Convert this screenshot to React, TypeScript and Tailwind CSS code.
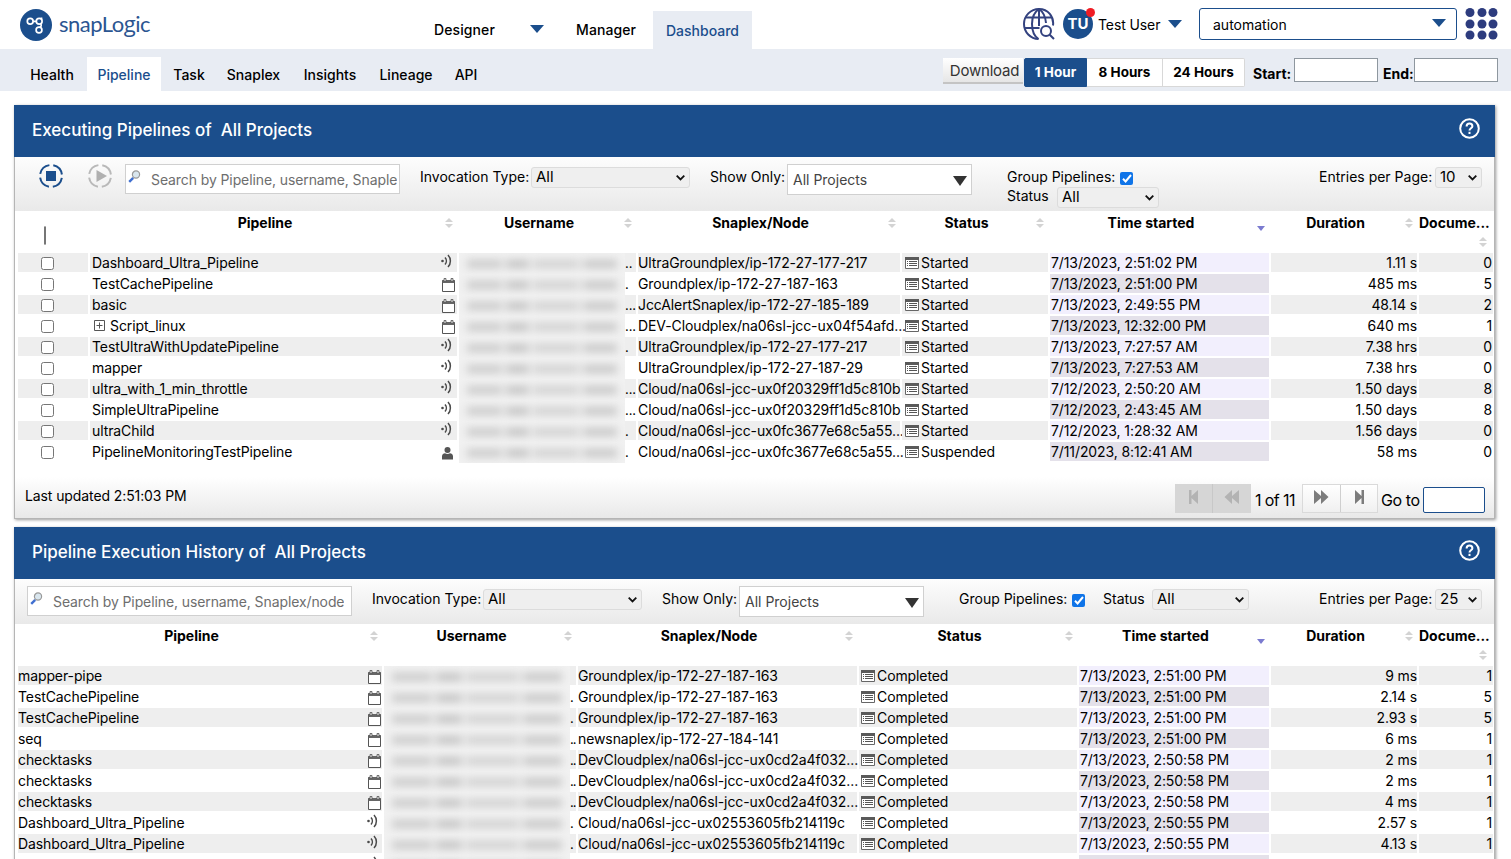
import { ReactNode } from "react";
import clsx from "clsx";

const BARS_A = [
  [4, 44, 50],
  [50, 46, 60],
  [100, 56, 50],
];

type Row = {
  name: string;
  icon: string;
  dots: string;
  node: string;
  status: string;
  time: string;
  duration: string;
  docs: string;
  child?: boolean;
};

const executing: Row[] = [
  { name: "Dashboard_Ultra_Pipeline", icon: "ultra", dots: "..", node: "UltraGroundplex/ip-172-27-177-217", status: "Started", time: "7/13/2023, 2:51:02 PM", duration: "1.11 s", docs: "0" },
  { name: "TestCachePipeline", icon: "cal", dots: ".", node: "Groundplex/ip-172-27-187-163", status: "Started", time: "7/13/2023, 2:51:00 PM", duration: "485 ms", docs: "5" },
  { name: "basic", icon: "cal", dots: "...", node: "JccAlertSnaplex/ip-172-27-185-189", status: "Started", time: "7/13/2023, 2:49:55 PM", duration: "48.14 s", docs: "2" },
  { name: "Script_linux", icon: "cal", dots: "...", node: "DEV-Cloudplex/na06sl-jcc-ux04f54afd...", status: "Started", time: "7/13/2023, 12:32:00 PM", duration: "640 ms", docs: "1", child: true },
  { name: "TestUltraWithUpdatePipeline", icon: "ultra", dots: ".", node: "UltraGroundplex/ip-172-27-177-217", status: "Started", time: "7/13/2023, 7:27:57 AM", duration: "7.38 hrs", docs: "0" },
  { name: "mapper", icon: "ultra", dots: "", node: "UltraGroundplex/ip-172-27-187-29", status: "Started", time: "7/13/2023, 7:27:53 AM", duration: "7.38 hrs", docs: "0" },
  { name: "ultra_with_1_min_throttle", icon: "ultra", dots: "...", node: "Cloud/na06sl-jcc-ux0f20329ff1d5c810b", status: "Started", time: "7/12/2023, 2:50:20 AM", duration: "1.50 days", docs: "8" },
  { name: "SimpleUltraPipeline", icon: "ultra", dots: "...", node: "Cloud/na06sl-jcc-ux0f20329ff1d5c810b", status: "Started", time: "7/12/2023, 2:43:45 AM", duration: "1.50 days", docs: "8" },
  { name: "ultraChild", icon: "ultra", dots: ".", node: "Cloud/na06sl-jcc-ux0fc3677e68c5a55...", status: "Started", time: "7/12/2023, 1:28:32 AM", duration: "1.56 days", docs: "0" },
  { name: "PipelineMonitoringTestPipeline", icon: "user", dots: ".", node: "Cloud/na06sl-jcc-ux0fc3677e68c5a55...", status: "Suspended", time: "7/11/2023, 8:12:41 AM", duration: "58 ms", docs: "0" },
];

const history: Row[] = [
  { name: "mapper-pipe", icon: "cal", dots: "", node: "Groundplex/ip-172-27-187-163", status: "Completed", time: "7/13/2023, 2:51:00 PM", duration: "9 ms", docs: "1" },
  { name: "TestCachePipeline", icon: "cal", dots: ".", node: "Groundplex/ip-172-27-187-163", status: "Completed", time: "7/13/2023, 2:51:00 PM", duration: "2.14 s", docs: "5" },
  { name: "TestCachePipeline", icon: "cal", dots: ".", node: "Groundplex/ip-172-27-187-163", status: "Completed", time: "7/13/2023, 2:51:00 PM", duration: "2.93 s", docs: "5" },
  { name: "seq", icon: "cal", dots: "..", node: "newsnaplex/ip-172-27-184-141", status: "Completed", time: "7/13/2023, 2:51:00 PM", duration: "6 ms", docs: "1" },
  { name: "checktasks", icon: "cal", dots: "..", node: "DevCloudplex/na06sl-jcc-ux0cd2a4f032...", status: "Completed", time: "7/13/2023, 2:50:58 PM", duration: "2 ms", docs: "1" },
  { name: "checktasks", icon: "cal", dots: "..", node: "DevCloudplex/na06sl-jcc-ux0cd2a4f032...", status: "Completed", time: "7/13/2023, 2:50:58 PM", duration: "2 ms", docs: "1" },
  { name: "checktasks", icon: "cal", dots: "..", node: "DevCloudplex/na06sl-jcc-ux0cd2a4f032...", status: "Completed", time: "7/13/2023, 2:50:58 PM", duration: "4 ms", docs: "1" },
  { name: "Dashboard_Ultra_Pipeline", icon: "ultra", dots: ".", node: "Cloud/na06sl-jcc-ux02553605fb214119c", status: "Completed", time: "7/13/2023, 2:50:55 PM", duration: "2.57 s", docs: "1" },
  { name: "Dashboard_Ultra_Pipeline", icon: "ultra", dots: ".", node: "Cloud/na06sl-jcc-ux02553605fb214119c", status: "Completed", time: "7/13/2023, 2:50:55 PM", duration: "4.13 s", docs: "1" },
  { name: "", icon: "ultra", dots: "", node: "", status: "", time: "", duration: "", docs: "" },
];

function Triangle({ className }: { className?: string }) {
  return (
    <svg width="14" height="8" viewBox="0 0 14 8" className={clsx("shrink-0", className)}>
      <path d="M0 0h14L7 8z" fill="currentColor" />
    </svg>
  );
}

function Logo() {
  return (
    <div className="flex w-[140px] shrink-0">
      <svg width="32" height="32" viewBox="0 0 32 32" className="mt-[9px] shrink-0">
        <circle cx="16" cy="16" r="16" fill="#1b4e8c" />
        <g fill="none" stroke="#fff" strokeWidth="1.7">
          <circle cx="10.2" cy="12.3" r="2.9" />
          <circle cx="19.2" cy="12.3" r="2.9" />
          <circle cx="19" cy="21" r="2.9" />
          <path d="M13.1 12.3h3.2M20.6 14.9c1.4 1.6.4 2.6-.8 3.3M21.5 10.5v-2" />
        </g>
      </svg>
      <span className="ml-[7px] mt-[9px] whitespace-nowrap font-['Lato'] text-[22px] leading-[28px] tracking-[-0.5px] text-[#2b5591]">
        snapLo<span className="font-['Open_Sans'] text-[22px]">g</span>ic
      </span>
    </div>
  );
}

function GlobeSearch() {
  return (
    <svg width="32" height="32" viewBox="0 0 32 32" fill="none" stroke="#33427f" strokeWidth="2" className="shrink-0">
      <path d="M30 17.5C31.2 8.500 25 1 16 1 7.700 1 1 7.700 1 16c0 8 6.500 15 14.500 15" />
      <path d="M16 1v17M15.500 31C11 28 9 22 9 16S11.500 4 16 1c4.500 3 6.500 8.500 7 14M3 9.500h26M1 20h15.500" />
      <circle cx="23" cy="23" r="5" />
      <path d="M26.700 26.700L31 31" />
    </svg>
  );
}

function AppsGrid() {
  return (
    <svg width="34" height="32" viewBox="0 0 34 32" fill="#2d3c7e" className="shrink-0">
      {[5, 17, 28].map((x) =>
        [4.5, 16, 27].map((y) => <circle key={x + "-" + y} cx={x} cy={y} r="4.500" />)
      )}
    </svg>
  );
}

function TypeIcon({ icon, dense }: { icon: string; dense?: boolean }) {
  if (icon === "ultra") {
    return (
      <svg width="11" height="14" viewBox="0 0 11 14" fill="none" stroke="#4a4a4a" strokeWidth="1.500" className={clsx("mb-[3px] shrink-0", dense ? "mr-[4px]" : "mr-[5px]")}>
        <circle cx="1.500" cy="7" r="1.300" fill="#4a4a4a" stroke="none" />
        <path d="M4 3.500c1.800 2 1.800 5 0 7M7 1c3.200 3.400 3.200 8.600 0 12" />
      </svg>
    );
  }
  if (icon === "user") {
    return (
      <svg width="11" height="13" viewBox="0 0 11 13" fill="#555" className="mr-[4px] mt-[3px] shrink-0">
        <circle cx="5.500" cy="3" r="3" />
        <path d="M0 12.500V9.200C0 7.200 1.600 6.200 3 6.200c1.500 1 3.500 1 5 0 1.400 0 3 1 3 3v3.300z" />
      </svg>
    );
  }
  return (
    <svg width="13" height="14" viewBox="0 0 13 14" className={clsx("mt-[3px] shrink-0", dense ? "mr-px" : "mr-[2px]")}>
      <path d="M.5 2.500h12v11H.5z" fill="#fff" stroke="#555" />
      <path d="M.5 2h12v3H.5z" fill="#666" />
      <path d="M2 .5h2v3H2zM9 .5h2v3H9z" fill="#ddd" stroke="#555" strokeWidth=".8" />
    </svg>
  );
}

function StatusIcon() {
  return (
    <svg width="14" height="12" viewBox="0 0 14 12" className="mr-[2px] shrink-0">
      <path d="M.5.5h13v11H.5z" fill="#fff" stroke="#666" />
      <path d="M0 0h14v3H0z" fill="#5a5a5a" />
      <path d="M2 4.500h1M4 4.500h8M2 6.500h1M4 6.500h8M2 8.500h1M4 8.500h8" stroke="#555" />
    </svg>
  );
}

function SortIcon() {
  return (
    <svg width="8" height="10" viewBox="0 0 8 10" fill="#d3d3d3" className="shrink-0">
      <path d="M4 0l4 4H0zM4 10l4-4H0z" />
    </svg>
  );
}

function CheckBox({ checked }: { checked?: boolean }) {
  if (checked) {
    return (
      <span className="flex h-[13px] w-[13px] shrink-0 items-center justify-center rounded-[2px] bg-[#0f74e8]">
        <svg width="10" height="9" viewBox="0 0 10 9" fill="none" stroke="#fff" strokeWidth="2">
          <path d="M1 4.800l2.600 2.600L9 1" />
        </svg>
      </span>
    );
  }
  return <span className="h-[13px] w-[13px] shrink-0 rounded-[2.5px] border border-[#767676] bg-white" />;
}

function Select({ value, className }: { value: string; className: string }) {
  return (
    <span className={clsx("flex h-[21px] shrink-0 items-center justify-between rounded-[3px] border border-[#dcdcdc] bg-[#efefef] pl-1 pr-1 text-[15px] text-black", className)}>
      {value}
      <svg width="9" height="6" viewBox="0 0 9 6" fill="none" stroke="#111" strokeWidth="1.800">
        <path d="M.7.7l3.800 3.800L8.300.7" />
      </svg>
    </span>
  );
}

function ProjectBox({ className }: { className: string }) {
  return (
    <span className={clsx("flex h-[31px] shrink-0 items-center justify-between border border-[#d0d0d0] bg-white pl-[5px] pr-[4px] text-[14px] text-[#444]", className)}>
      All Projects
      <svg width="14" height="10" viewBox="0 0 14 10" className="mt-[2px]">
        <path d="M0 0h14L7 10z" fill="#333" />
      </svg>
    </span>
  );
}

function SearchBox({ text, className }: { text: string; className: string }) {
  return (
    <span className={clsx("flex h-[30px] shrink-0 overflow-hidden border border-[#d0d0d0] bg-white pl-[2px] pr-[2px]", className)}>
      <svg width="13" height="13" viewBox="0 0 13 13" className="mt-[5px] shrink-0">
        <path d="M1.200 11.800l4-4" stroke="#3f6fd0" strokeWidth="2.400" />
        <circle cx="8" cy="4.500" r="3.600" fill="#d9e6ee" stroke="#999" strokeWidth="1.200" />
      </svg>
      <span className="ml-[10px] overflow-hidden whitespace-nowrap text-[14px] leading-[30px] tracking-[-0.1px] text-[#6e6e6e]">{text}</span>
    </span>
  );
}

function Label({ children, className }: { children: ReactNode; className: string }) {
  return <span className={clsx("shrink-0 whitespace-nowrap text-[14px] leading-[20px]", className)}>{children}</span>;
}

function PanelTitle({ children }: { children: ReactNode }) {
  return (
    <div className="flex h-[52px] shrink-0 items-center justify-between bg-[#1b4e8c] pl-[18px] pr-[15px]">
      <h2 className="whitespace-nowrap text-[17px] font-medium text-white">{children}</h2>
      <svg width="21" height="21" viewBox="0 0 21 21" fill="none" stroke="#fff" strokeWidth="2" className="mb-[5px]">
        <circle cx="10.500" cy="10.500" r="9.300" />
        <path d="M7.600 8.400c0-1.700 1.300-2.800 2.900-2.800s2.900 1 2.900 2.600c0 2-2.900 2.200-2.900 4.300" />
        <path d="M10.500 13.800v2.200" />
      </svg>
    </div>
  );
}

function HeadCell({ title, active }: { title: string; active?: boolean }) {
  return (
    <div className="flex pt-[2px]">
      <span className="flex-1 text-center leading-[20px]">{title}</span>
      <span className="w-[17px] pl-[5px] pt-[5px]">
        {active ? (
          <svg width="8" height="5" viewBox="0 0 8 5" className="mt-[8px]">
            <path d="M0 0h8L4 5z" fill="#7b7bd0" />
          </svg>
        ) : (
          <SortIcon />
        )}
      </span>
    </div>
  );
}

function Blurred() {
  return (
    <div className="flex h-[21px] flex-1 items-center overflow-hidden bg-[#f1f1f1]">
      <div className="flex h-[8px] w-full gap-1 px-2 blur-[4px]">
        <span className="flex-[3] bg-[#c9c9c9]" />
        <span className="flex-[2] bg-[#c2c2c2]" />
        <span className="flex-[4] bg-[#d0d0d0]" />
        <span className="flex-[3] bg-[#c6c6c6]" />
      </div>
    </div>
  );
}

function Table({ rows, selectable }: { rows: Row[]; selectable?: boolean }) {
  const cols = selectable
    ? "grid-cols-[70px_367px_177px_262px_146px_219px_146px_74px]"
    : "grid-cols-[364px_192px_279px_218px_190px_146px_74px]";
  return (
    <div className="pl-[3px] text-[14px] tracking-[-0.1px] text-black">
      <div className={clsx("grid h-[42px] gap-x-[2px] font-bold tracking-normal", cols)}>
        {selectable && (
          <div className="pl-[26px] pt-[14px]">
            <CheckBox />
          </div>
        )}
        <HeadCell title="Pipeline" />
        <HeadCell title="Username" />
        <HeadCell title="Snaplex/Node" />
        <HeadCell title="Status" />
        <HeadCell title="Time started" active />
        <HeadCell title="Duration" />
        <div className="flex flex-col pt-[2px]">
          <span className="leading-[20px]">Docume...</span>
          <span className="ml-[60px] mt-[4px]">
            <SortIcon />
          </span>
        </div>
      </div>
      {rows.map((r, i) => {
        const cell = clsx("flex h-[19px] items-center whitespace-nowrap", i % 2 === 0 && "bg-[#eeeeee]");
        return (
          <div key={i} className={clsx("grid h-[21px] gap-x-[2px]", cols)}>
            {selectable && (
              <div className={clsx(cell, "pl-[23px] pt-[2px]")}>
                <CheckBox />
              </div>
            )}
            <div className={clsx(cell, "justify-between", selectable && "pl-[2px]")}>
              <span className="flex items-center">
                {r.child && (
                  <svg width="11" height="11" viewBox="0 0 11 11" fill="none" stroke="#555" className="ml-[2px] mr-[5px]">
                    <path d="M.5.5h10v10H.5zM2.500 5.500h6M5.500 2.500v6" />
                  </svg>
                )}
                {r.name}
              </span>
              <TypeIcon icon={r.icon} dense={!selectable} />
            </div>
            <div className={clsx("flex h-[19px]", i % 2 === 0 && "bg-[#eeeeee]")}>
              <Blurred />
              <span className={clsx("text-[13px] leading-[20px]", selectable ? "w-[11px]" : "w-[6px] tracking-[-1px]")}>{r.dots}</span>
            </div>
            <div className={cell}>{r.node}</div>
            <div className={clsx(cell, selectable ? "pl-[3px]" : "pl-[2px]")}>
              {r.status && <StatusIcon />}
              {r.status}
            </div>
            <div className={clsx("flex h-[19px] items-center whitespace-nowrap pl-px", i % 2 === 0 ? "bg-[#f2effd]" : "bg-[#e4e1ea]")}>{r.time}</div>
            <div className={clsx(cell, "justify-end")}>{r.duration}</div>
            <div className={clsx(cell, "justify-end pr-px")}>{r.docs}</div>
          </div>
        );
      })}
    </div>
  );
}

function PagerIcon({ kind }: { kind: string }) {
  return (
    <svg width="18" height="14" viewBox="0 0 18 14" fill="currentColor">
      {kind === "first" && <path d="M4 0h2.500v6L13 0v14L6.500 8v6H4z" />}
      {kind === "prev" && <path d="M9 0v6l7-6v14L9 8v6L1.500 7z" />}
      {kind === "next" && <path d="M9 0v6L2 0v14l7-6v6l7.500-7z" />}
      {kind === "last" && <path d="M14 0h-2.500v6L5 0v14l6.500-6v6H14z" />}
    </svg>
  );
}

const tabs = [
  { title: "Health", width: "w-[64px]" },
  { title: "Pipeline", width: "w-[74px]" },
  { title: "Task", width: "w-[50px]" },
  { title: "Snaplex", width: "w-[73px]" },
  { title: "Insights", width: "w-[74px]" },
  { title: "Lineage", width: "w-[72px]" },
  { title: "API", width: "w-[42px]" },
];

export default function App() {
  return (
    <div className="h-[859px] w-[1511px] overflow-hidden bg-white font-['Inter',sans-serif] text-black">
      <header className="flex h-[49px] pl-[20px]">
        <Logo />
        <div className="ml-[274px] flex w-[219px] items-center pt-[9px] text-[14px] font-medium tracking-[0.1px]">
          <span className="w-[96px]">Designer</span>
          <Triangle className="text-[#1b4e8c]" />
          <span className="ml-[32px]">Manager</span>
        </div>
        <div className="mt-[11px] flex h-[38px] w-[99px] items-center justify-center bg-[#e8ecf3] text-[14px] font-medium text-[#1b4e8c]">Dashboard</div>
        <div className="ml-[271px] flex h-[49px] items-center pb-px">
          <GlobeSearch />
          <div className="relative ml-[8px] flex h-[30px] w-[30px] items-center justify-center rounded-full bg-[#1b4e8c] text-[15px] font-bold text-white">
            TU
            <span className="absolute -top-[1px] right-[-2px] h-[9px] w-[9px] rounded-full bg-[#f01c24]" />
          </div>
          <span className="ml-[5px] w-[70px] whitespace-nowrap text-[14px] tracking-[-0.1px]">Test User</span>
          <Triangle className="text-[#1b4e8c]" />
          <div className="ml-[17px] flex h-[32px] w-[258px] items-center justify-between rounded-[3px] border border-[#1b4e8c] pl-[13px] pr-[10px] text-[14px]">
            automation
            <Triangle className="mb-[3px] text-[#1b4e8c]" />
          </div>
          <div className="ml-[8px]">
            <AppsGrid />
          </div>
        </div>
      </header>

      <nav className="flex h-[42px] bg-[#e8ecf3] pl-[20px]">
        <div className="flex w-[923px] gap-[3px] pt-[8px]">
          {tabs.map((t) => (
            <a
              key={t.title}
              className={clsx(
                "flex h-[34px] items-center justify-center text-[14px] font-medium",
                t.width,
                t.title === "Pipeline" && "bg-white text-[#1b4e8c]"
              )}
            >
              {t.title}
            </a>
          ))}
        </div>
        <button className="mt-[9px] h-[26px] w-[80px] border-b-2 border-[#c4c4c4] bg-linear-to-b from-white to-[#e6e6e6] pl-[3px] text-[15px] leading-[23px] tracking-[-0.2px] text-[#333]">
          Download
        </button>
        <div className="ml-px mt-[9px] flex h-[29px] text-[13.5px] font-bold">
          <button className="w-[63px] rounded-l-[2px] border border-[#1b4e8c] bg-[#1b4e8c] text-white">1 Hour</button>
          <button className="w-[76px] border border-l-0 border-[#d8d8d8] bg-white">8 Hours</button>
          <button className="w-[82px] rounded-r-[2px] border border-l-0 border-[#d8d8d8] bg-white">24 Hours</button>
        </div>
        <span className="ml-[8px] w-[41px] pt-[14px] text-[14px] font-bold">Start:</span>
        <span className="mt-[9px] h-[24px] w-[84px] border border-[#8e979f] bg-white" />
        <span className="ml-[5px] w-[31px] pt-[14px] text-[14px] font-bold">End:</span>
        <span className="mt-[9px] h-[24px] w-[84px] border border-[#8e979f] bg-white" />
      </nav>

      <section className="ml-[14px] mt-[14px] h-[414px] w-[1481px] shadow-[1px_1px_3px_rgba(0,0,0,0.4)]">
        <PanelTitle>Executing Pipelines of&nbsp; All Projects</PanelTitle>
        <div className="border-x border-[#b5b5b5]">
          <div className="flex h-[54px] bg-linear-to-b from-[#fdfdfd] to-[#e9e9e9] pl-[23px]">
            <svg width="26" height="26" viewBox="0 0 26 26" fill="none" stroke="#1b4e8c" strokeWidth="2" className="mt-[6px] shrink-0">
              <circle cx="13" cy="13" r="11" strokeDasharray="13.280 4" strokeDashoffset="-2" />
              <path d="M8 8h10v10H8z" fill="#1b4e8c" stroke="none" />
            </svg>
            <svg width="26" height="26" viewBox="0 0 26 26" fill="none" stroke="#b9b9b9" strokeWidth="2" className="ml-[23px] mt-[6px] shrink-0">
              <circle cx="13" cy="13" r="11" strokeDasharray="13.280 4" strokeDashoffset="-2" />
              <path d="M9.500 7L20 13 9.500 19z" fill="#b0b0b0" stroke="none" />
            </svg>
            <SearchBox text="Search by Pipeline, username, Snaplex/node" className="ml-[12px] mt-[7px] w-[275px]" />
            <Label className="ml-[20px] mt-[10px] w-[111px]">Invocation Type:</Label>
            <Select value="All" className="mt-[10px] w-[159px]" />
            <Label className="ml-[20px] mt-[10px] w-[77px]">Show Only:</Label>
            <ProjectBox className="mt-[7px] w-[185px]" />
            <div className="ml-[35px] mt-[10px] w-[312px]">
              <div className="flex h-[20px]">
                <Label className="w-[113px]">Group Pipelines:</Label>
                <span className="pt-[5px]">
                  <CheckBox checked />
                </span>
              </div>
              <div className="flex">
                <Label className="-mt-px w-[50px]">Status</Label>
                <Select value="All" className="w-[102px]" />
              </div>
            </div>
            <Label className="mt-[10px] w-[116px]">Entries per Page:</Label>
            <Select value="10" className="mt-[10px] w-[47px]" />
          </div>
          <Table rows={executing} selectable />
          <div className="flex h-[56px] border-b border-[#b5b5b5] bg-linear-to-b from-white from-25% to-[#e9e9e9] pl-[10px]">
            <span className="w-[1150px] pt-[23px] text-[14px] leading-[20px] tracking-[-0.1px]">Last updated 2:51:03 PM</span>
            <div className="mt-[21px] flex h-[29px] w-[76px] bg-[#d6d6d6] text-[#b3b3b3]">
              <span className="flex w-[38px] items-center justify-center border-r border-[#c8c8c8] pb-[3px]">
                <PagerIcon kind="first" />
              </span>
              <span className="flex w-[38px] items-center justify-center pb-[3px]">
                <PagerIcon kind="prev" />
              </span>
            </div>
            <span className="ml-[4px] w-[47px] whitespace-nowrap pt-[27px] text-[16px] leading-[20px] tracking-[-0.6px]">1 of 11</span>
            <div className="mt-[21px] flex h-[29px] w-[76px] border border-[#dadada] bg-linear-to-b from-white to-[#f0f0f0] text-[#7c7c7c]">
              <span className="flex w-[38px] items-center justify-center border-r border-[#cfcfcf] pb-[3px]">
                <PagerIcon kind="next" />
              </span>
              <span className="flex w-[37px] items-center justify-center pb-[3px]">
                <PagerIcon kind="last" />
              </span>
            </div>
            <span className="ml-[3px] w-[42px] whitespace-nowrap pt-[27px] text-[16px] leading-[20px] tracking-[-0.4px]">Go to</span>
            <span className="mt-[24px] h-[26px] w-[62px] rounded-[2px] border border-[#1b4e8c] bg-white" />
          </div>
        </div>
      </section>

      <section className="ml-[14px] mt-[8px] h-[414px] w-[1481px] shadow-[1px_1px_3px_rgba(0,0,0,0.4)]">
        <PanelTitle>Pipeline Execution History of&nbsp; All Projects</PanelTitle>
        <div className="border-x border-[#b5b5b5]">
          <div className="flex h-[45px] bg-linear-to-b from-[#fdfdfd] to-[#e9e9e9] pl-[12px]">
            <SearchBox text="Search by Pipeline, username, Snaplex/node" className="mt-[7px] w-[325px]" />
            <Label className="ml-[20px] mt-[10px] w-[111px]">Invocation Type:</Label>
            <Select value="All" className="mt-[10px] w-[159px]" />
            <Label className="ml-[20px] mt-[10px] w-[77px]">Show Only:</Label>
            <ProjectBox className="mt-[7px] w-[185px]" />
            <Label className="ml-[35px] mt-[10px] w-[113px]">Group Pipelines:</Label>
            <span className="mt-[15px]">
              <CheckBox checked />
            </span>
            <Label className="ml-[18px] mt-[10px] w-[49px]">Status</Label>
            <Select value="All" className="mt-[10px] w-[97px]" />
            <Label className="ml-[70px] mt-[10px] w-[116px]">Entries per Page:</Label>
            <Select value="25" className="mt-[10px] w-[47px]" />
          </div>
          <Table rows={history} />
        </div>
      </section>
    </div>
  );
}
